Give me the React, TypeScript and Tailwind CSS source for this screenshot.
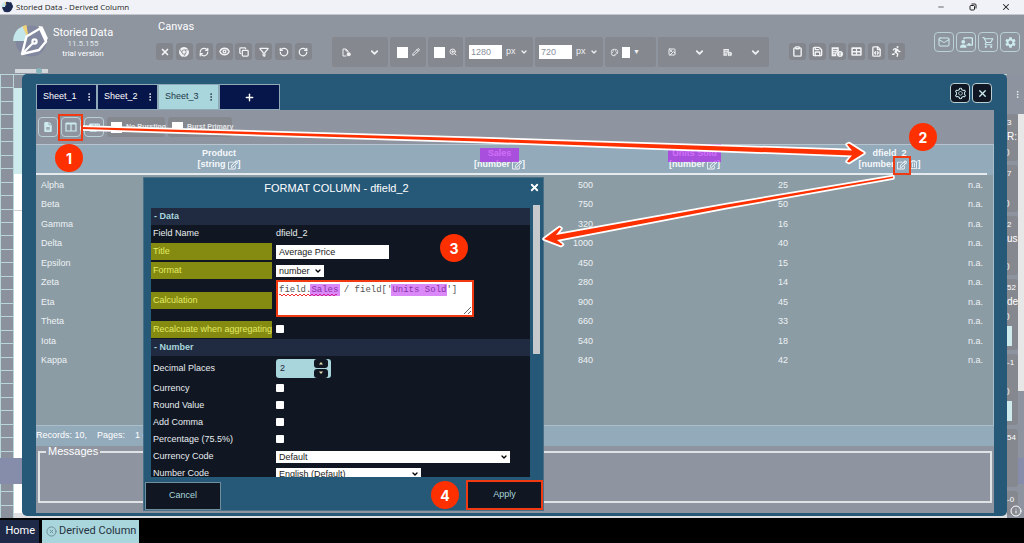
import React from "react";
import {
  Clipboard, Copy, Eye, FileCode, Filter, Image, Mail, Minus, Pencil, Plus, RefreshCw,
  RotateCcw, RotateCw, Save, X, ZoomIn, ChevronDown, Info, CircleX, EllipsisVertical,
} from "lucide-react";
import { FaChrome, FaChalkboardUser, FaPersonRunning, FaFileInvoice, FaFileLines } from "react-icons/fa6";
import { FaRegEdit, FaRegTrashAlt } from "react-icons/fa";
import { MdOutlinePalette, MdOutlineShoppingCart, MdSettings } from "react-icons/md";
import { AiOutlineSetting } from "react-icons/ai";

const sans = "font-['Liberation_Sans',Arial,sans-serif]";
const roboto = "font-['Roboto',sans-serif]";

function Logo({ className, dark, pen }: { className: string; dark: string; pen: string }) {
  return (
    <svg viewBox="0 0 36 36" className={className} aria-hidden="true">
      <circle cx="19" cy="18" r="15.500" fill={dark} />
      <path d="M17 18 L1 18 A17 17 0 0 1 11 3 Z" fill="#c3e7ea" />
      <path d="M17 18 L10.500 3.500 A16 16 0 0 1 14.500 2 Z" fill="#f2d37a" />
      <path d="M10 31 L14.500 13.500 L28 5.500 L34 18.500 L27 27 Z" fill={dark} stroke={pen} strokeWidth="2.400" strokeLinejoin="round" />
      <path d="M26.500 3 L30.500 3.500 L35.800 15 L34 20 Z" fill={pen} />
      <path d="M10 31 L21 20" stroke={pen} strokeWidth="2.200" />
      <circle cx="22.500" cy="18.500" r="3.200" fill={pen} />
      <circle cx="22.500" cy="18.500" r="1" fill={dark} />
    </svg>
  );
}

function PageDot({ size }: { size: number }) {
  return (
    <svg viewBox="0 0 18 16" width={size} height={size} fill="none" stroke="currentColor" strokeWidth="2" aria-hidden="true">
      <path d="M9 15H2V1H8L12 5V8M8 1V5H12" />
      <circle cx="13.500" cy="11.500" r="4" fill="currentColor" stroke="none" />
    </svg>
  );
}

function ReportInfo({ size }: { size: number }) {
  return (
    <svg viewBox="0 0 20 18" width={size} height={size} aria-hidden="true">
      <path d="M1 1H13V8A6 6 0 0 0 9 16H1Z" fill="currentColor" />
      <path d="M3.500 5H10.500M3.500 8.500H9M3.500 12H7" stroke="#83868c" strokeWidth="1.400" />
      <circle cx="15" cy="12.500" r="5" fill="currentColor" />
      <path d="M15 9.500V13.500M15 14.500V16" stroke="#83868c" strokeWidth="1.500" />
    </svg>
  );
}

function GridIcon({ size }: { size: number }) {
  return (
    <svg viewBox="0 0 18 16" width={size} height={size} aria-hidden="true">
      <path fill="currentColor" fillRule="evenodd" d="M2 1H16Q17.500 1 17.500 2.500V13.500Q17.500 15 16 15H2Q.500 15 .500 13.500V2.500Q.500 1 2 1ZM3 4V7H8V4ZM10 4V7H15V4ZM3 9.500V12.500H8V9.500ZM10 9.500V12.500H15V9.500Z" />
    </svg>
  );
}

function ToolButton({ label, children }: { label: string; children: React.ReactNode }) {
  return (
    <button aria-label={label} className="flex size-[17px] items-center justify-center rounded-[3px] bg-[#83868c] text-[#f1f3f5]">
      {children}
    </button>
  );
}

function Group({ className, children }: { className: string; children: React.ReactNode }) {
  return <div className={`flex h-[30px] shrink-0 items-center rounded-[2px] bg-[#85888f] text-[#eef0f2] ${className}`}>{children}</div>;
}

function OutlineButton({ label, className = "", children }: { label: string; className?: string; children: React.ReactNode }) {
  return (
    <button aria-label={label} className={`flex size-5 shrink-0 items-center justify-center rounded-[4px] border border-[#b9d0d5] text-[#cdebee] ${className}`}>
      {children}
    </button>
  );
}

function SizeField({ label, value }: { label: string; value: string }) {
  return (
    <Group className="w-[68px] gap-1 pl-1">
      <input aria-label={label} defaultValue={value} className="h-[14px] w-[33px] bg-white pl-[2px] text-[9px] leading-3 text-[#8a919b]" />
      <button aria-label={`${label} unit`} className="flex items-center gap-1 text-[9px]">
        px <ChevronDown size={8} strokeWidth={4} />
      </button>
    </Group>
  );
}

function Header() {
  return (
    <header className="flex h-[59px] shrink-0 bg-[#8e959f] text-white">
      <Logo className="ml-3 mt-2 size-9 shrink-0" dark="#81879e" pen="#ffffff" />
      <div className={`ml-[5px] mt-3 flex w-[60px] shrink-0 flex-col items-center text-center ${roboto}`}>
        <div className="whitespace-nowrap text-[11px] leading-3">Storied Data</div>
        <div className="text-[8px] leading-[10px] text-[#dfe3e6]">11.5.155</div>
        <div className="whitespace-nowrap text-[8px] leading-[10px]">trial version</div>
      </div>
      <div className="ml-[43px] mt-[6px] w-[156px] shrink-0">
        <h1 className={`pl-[2px] text-[11px] leading-3 ${roboto}`}>Canvas</h1>
        <div className="mt-[10px] flex justify-between">
          <ToolButton label="Close"><X size={10} strokeWidth={4} /></ToolButton>
          <ToolButton label="Browser"><FaChrome size={10} /></ToolButton>
          <ToolButton label="Refresh"><RefreshCw size={10} strokeWidth={3} /></ToolButton>
          <ToolButton label="Preview"><Eye size={11} strokeWidth={3} /></ToolButton>
          <ToolButton label="Copy"><Copy size={10} strokeWidth={3} /></ToolButton>
          <ToolButton label="Filter"><Filter size={10} strokeWidth={3} /></ToolButton>
          <ToolButton label="Undo"><RotateCcw size={10} strokeWidth={3} /></ToolButton>
          <ToolButton label="Redo"><RotateCw size={10} strokeWidth={3} /></ToolButton>
        </div>
      </div>
      <div className={`ml-5 mt-[22px] flex shrink-0 gap-[2px] ${sans}`}>
        <Group className="w-14 justify-between pl-[10px] pr-2">
          <PageDot size={9} />
          <ChevronDown size={11} strokeWidth={4} />
        </Group>
        <Group className="w-9 justify-center gap-1">
          <span className="size-[11px] bg-white" />
          <Pencil size={8} strokeWidth={3} />
        </Group>
        <Group className="w-[35px] justify-center gap-1">
          <span className="size-[11px] bg-white" />
          <ZoomIn size={8} strokeWidth={3} />
        </Group>
        <SizeField label="Width" value="1280" />
        <SizeField label="Height" value="720" />
        <Group className="w-[51px] gap-[3px] pl-[5px]">
          <MdOutlinePalette size={9} />
          <span className="h-[11px] w-2 bg-white" />
          <span className="text-[7px]">▼</span>
        </Group>
        <Group className="w-[111px] justify-between pl-[10px] pr-2">
          <Image size={8} strokeWidth={3} />
          <ChevronDown size={11} strokeWidth={4} />
          <ReportInfo size={9} />
          <ChevronDown size={11} strokeWidth={4} />
        </Group>
      </div>
      <div className="ml-5 mt-7 flex w-[116px] shrink-0 justify-between">
        <ToolButton label="Paste"><Clipboard size={11} strokeWidth={3} /></ToolButton>
        <ToolButton label="Save"><Save size={11} strokeWidth={3} /></ToolButton>
        <ToolButton label="Report"><ReportInfo size={12} /></ToolButton>
        <ToolButton label="Table"><GridIcon size={11} /></ToolButton>
        <ToolButton label="Code"><FileCode size={11} strokeWidth={3} /></ToolButton>
        <ToolButton label="Run"><FaPersonRunning size={11} /></ToolButton>
      </div>
      <div className="ml-auto mr-1 mt-[17px] flex gap-[2px]">
        <OutlineButton label="Mail"><Mail size={12} strokeWidth={2} /></OutlineButton>
        <OutlineButton label="Training"><FaChalkboardUser size={13} /></OutlineButton>
        <OutlineButton label="Cart"><MdOutlineShoppingCart size={13} /></OutlineButton>
        <OutlineButton label="Settings"><MdSettings size={13} /></OutlineButton>
      </div>
    </header>
  );
}

const cards = [
  { h: "h-[47px]", first: "3", second: "R:", last: ")" },
  { h: "h-[47px]", first: "7", second: "", last: ")" },
  { h: "h-[59px]", first: "2", second: "us", last: ")" },
  { h: "h-[71px]", first: "52", second: "de", last: ")", swatch: true },
  { h: "h-[71px]", first: "-1", second: "", last: ")", swatch: true },
  { h: "h-[58px]", first: "54", second: "", last: "" },
  { h: "h-[24px]", first: "-0", second: "", last: "" },
];

function Backdrop() {
  return (
    <div className="flex h-full overflow-hidden bg-[#8d949f]">
      <div className="flex w-[14px] shrink-0 flex-col bg-[#8b929d]">
        {Array.from({ length: 33 }, (_, i) => (
          <div key={i} className="flex-1 border-l border-r border-t border-[#b9d6da]" />
        ))}
      </div>
      <div className="flex grow flex-col bg-white">
        <div className="h-[14px] border-t border-[#b9d6da] bg-[#8b929d]" />
        <div className="h-[86px] bg-[#cdeaec]" />
        <div className="h-[37px] border-b border-[#d0d0d4]" />
        <div className="grow" />
        <div className="h-[5px] bg-[#dfdfe1]" />
      </div>
      <div className={`relative flex w-[17px] shrink-0 text-white ${sans}`}>
        <div className="flex w-[11px] shrink-0 flex-col gap-[4px] bg-[#8d949f] pt-10">
          {cards.map((c, i) => (
            <div key={i} className={`${c.h} relative z-10 flex shrink-0 flex-col rounded-r-[3px] bg-[#85888f] py-1 text-[8px] leading-[10px]`}>
              <span>{c.first}</span>
              {c.second && <span className="mt-1 text-[10px]">{c.second}</span>}
              {c.last && <span className="mt-auto">{c.last}</span>}
              {c.swatch && <span className="mt-[5px] h-5 w-[5px] shrink-0 bg-[#cdeaec]" />}
            </div>
          ))}
        </div>
        <EllipsisVertical size={9} className="absolute right-[2px] top-4" />
        <div className="pt-10">
          <div className="h-[277px] w-[6px] bg-[#e7e7e7]" />
        </div>
      </div>
    </div>
  );
}

const data = [
  ["Alpha", 500, 25], ["Beta", 750, 50], ["Gamma", 320, 16], ["Delta", 1000, 40], ["Epsilon", 450, 15],
  ["Zeta", 280, 14], ["Eta", 900, 45], ["Theta", 660, 33], ["Iota", 540, 18], ["Kappa", 840, 42],
];

function ColumnHead({ title, type, mark, removable }: { title: string; type: string; mark?: string; removable?: boolean }) {
  return (
    <th className="h-[28px] p-0 align-middle font-bold">
      <div className="flex flex-col items-center leading-[11px]">
        <span className="relative">
          {title}
          {mark && <span className={`absolute bottom-[-3px] z-30 bg-[#b812f3]/60 ${mark}`} />}
        </span>
        <span className="flex items-center">
          <span className="mr-[2px]">[{type}</span>
          <FaRegEdit size={10} />
          {removable && <FaRegTrashAlt size={9} className="ml-[2px]" />}
          <span>]</span>
        </span>
      </div>
    </th>
  );
}

function Columns() {
  return (
    <colgroup>
      <col />
      <col className="w-[195px]" />
      <col className="w-[195px]" />
      <col className="w-[195px]" />
    </colgroup>
  );
}

function DataTable() {
  return (
    <div className="h-[282px] border-b border-r border-[#a9bec9] bg-[#8b9ca5]">
      <div className="border-t border-[#b7c4cd] bg-[#93aabb] pr-[6px] text-[#f5f8fa]">
        <div className="border-b-2 border-[#e4eaee]">
          <table className="w-full table-fixed border-collapse text-[9px]">
            <Columns />
            <thead>
              <tr>
                <ColumnHead title="Product" type="string" />
                <ColumnHead title="Sales" type="number" mark="-left-2 -right-2 h-[14px]" />
                <ColumnHead title="Units Sold" type="number" mark="-left-1 -right-1 h-[18px]" />
                <ColumnHead title="dfield_2" type="number" removable />
              </tr>
            </thead>
          </table>
        </div>
      </div>
      <div className="pr-[6px]">
        <table aria-label="Records" className="h-[195px] w-full table-fixed border-collapse text-[9px] leading-[10px] text-[#eef2f4]">
          <Columns />
          <tbody>
            {data.map(([name, sales, units]) => (
              <tr key={name}>
                <td className="py-0 pl-[5px]">{name}</td>
                <td className="py-0 pr-1 text-right">{sales}</td>
                <td className="py-0 pr-1 text-right">{units}</td>
                <td className="py-0 pr-1 text-right">n.a.</td>
              </tr>
            ))}
          </tbody>
        </table>
      </div>
    </div>
  );
}

function Section({ children }: { children: React.ReactNode }) {
  return <h3 className="flex h-[17px] shrink-0 items-center bg-[#202b41] pl-[3px] font-bold text-[#a9d6dc]">{children}</h3>;
}

function Row({ label, htmlFor, h, mark, children }: { label: string; htmlFor?: string; h: string; mark?: boolean; children: React.ReactNode }) {
  return (
    <div className={`flex shrink-0 items-center ${h}`}>
      <label
        htmlFor={htmlFor}
        className={`flex h-[17px] w-[121px] shrink-0 items-center whitespace-nowrap pl-[2px] ${mark ? "bg-[#858b11] text-[#e2ea62]" : "text-[#e8edf0]"}`}
      >
        {label}
      </label>
      <div className="ml-1 flex grow items-center">{children}</div>
    </div>
  );
}

function Dropdown({ id, value, w }: { id: string; value: string; w: string }) {
  return (
    <div className={`relative ${w}`}>
      <select id={id} className="block h-3 w-full appearance-none bg-white pl-[3px] text-[9px] leading-3 text-[#222]">
        <option>{value}</option>
      </select>
      <ChevronDown size={8} strokeWidth={4} className="pointer-events-none absolute right-[2px] top-[2px] text-black" />
    </div>
  );
}

function Tick({ id }: { id: string }) {
  return <input id={id} type="checkbox" className="mb-[2px] size-2 appearance-none rounded-[1px] bg-white" />;
}

function FormatDialog() {
  return (
    <section
      aria-label="Format column"
      className={`absolute left-[121px] top-[103px] flex h-[334px] w-[401px] flex-col border border-[#4a7088] bg-[#265878] ${sans}`}
    >
      <div className="flex h-[30px] shrink-0 items-start pt-[3px] text-white">
        <h2 className="grow text-center text-[11px] leading-[14px]">FORMAT COLUMN - dfield_2</h2>
        <button aria-label="Close dialog" className="mr-[3px] mt-[1px]"><X size={11} strokeWidth={4} /></button>
      </div>
      <div className="flex min-h-0 grow">
        <div className="ml-[7px] flex h-[269px] w-[379px] flex-col overflow-hidden bg-[#101722] text-[9px] leading-[11px]">
          <Section>- Data</Section>
          <Row label="Field Name" h="h-[17px]"><span className="text-[#e8edf0]">dfield_2</span></Row>
          <Row label="Title" htmlFor="title" h="h-[19px]" mark>
            <input id="title" defaultValue="Average Price" className="h-[14px] w-[113px] bg-white pl-[3px] text-[#222]" />
          </Row>
          <Row label="Format" htmlFor="format" h="h-[19px]" mark><Dropdown id="format" value="number" w="w-12" /></Row>
          <Row label="Calculation" htmlFor="calculation" h="h-10" mark>
            <div className="relative -mt-1">
              <textarea
                id="calculation"
                spellCheck={false}
                defaultValue="field.Sales / field['Units Sold']"
                className="block h-[37px] w-[198px] overflow-hidden border-2 border-[#f23a12] bg-white px-[1px] py-[3px] font-['Liberation_Mono',monospace] text-[9px] leading-[10px] text-[#555]"
              />
              <svg className="pointer-events-none absolute left-[3px] top-[13px]" width="60" height="3" aria-hidden="true">
                <path d="M0 2 q1 -2 2 0 t2 0 t2 0 t2 0 t2 0 t2 0 t2 0 t2 0 t2 0 t2 0 t2 0 t2 0 t2 0 t2 0 t2 0 t2 0 t2 0 t2 0 t2 0 t2 0 t2 0 t2 0 t2 0 t2 0 t2 0 t2 0 t2 0 t2 0 t2 0" fill="none" stroke="#f03030" />
              </svg>
              <span className="pointer-events-none absolute left-[34px] top-1 h-3 w-[30px] bg-[#b812f3]/50" />
              <span className="pointer-events-none absolute left-[115px] top-1 h-3 w-[56px] bg-[#b812f3]/50" />
            </div>
          </Row>
          <Row label="Recalcuate when aggregating" htmlFor="recalc" h="h-[19px]" mark><Tick id="recalc" /></Row>
          <Section>- Number</Section>
          <Row label="Decimal Places" htmlFor="places" h="h-6">
            <div className="flex h-[19px] w-[55px] items-center rounded-[3px] bg-[#a9d6dc]">
              <input id="places" defaultValue="2" className="h-4 w-[38px] bg-transparent pl-1 text-[#223]" />
              <div className="flex h-[19px] w-[14px] flex-col gap-px">
                <button aria-label="Increase" className="flex flex-1 items-center justify-center rounded-[3px] bg-[#101722]">
                  <svg width="6" height="4" aria-hidden="true"><path d="M1 3.500 L3 1 L5 3.500Z" fill="#e9dfb0" /></svg>
                </button>
                <button aria-label="Decrease" className="flex flex-1 items-center justify-center rounded-[3px] bg-[#101722]">
                  <svg width="6" height="4" aria-hidden="true"><path d="M1 .500 L3 3 L5 .500Z" fill="#e9dfb0" /></svg>
                </button>
              </div>
            </div>
          </Row>
          <Row label="Currency" htmlFor="currency" h="h-[17px]"><Tick id="currency" /></Row>
          <Row label="Round Value" htmlFor="round" h="h-[17px]"><Tick id="round" /></Row>
          <Row label="Add Comma" htmlFor="comma" h="h-[17px]"><Tick id="comma" /></Row>
          <Row label="Percentage (75.5%)" htmlFor="pct" h="h-[17px]"><Tick id="pct" /></Row>
          <Row label="Currency Code" htmlFor="ccode" h="h-[17px]"><Dropdown id="ccode" value="Default" w="w-[234px]" /></Row>
          <Row label="Number Code" htmlFor="ncode" h="h-[17px]"><Dropdown id="ncode" value="English (Default)" w="w-[145px]" /></Row>
        </div>
        <div className="-mt-[3px] ml-[3px] h-[149px] w-[7px] bg-[#c6c9cc]" />
      </div>
      <div className="flex shrink-0 items-end justify-between pl-[1px] text-[9px] text-[#a9d6dc]">
        <button className="h-7 w-[76px] border border-[#6f8f9d] bg-[#101722]">Cancel</button>
        <button className="h-[30px] w-[77px] border-2 border-[#f23a12] bg-[#101722]">Apply</button>
      </div>
    </section>
  );
}

function Tab({ label, active }: { label: string; active?: boolean }) {
  return (
    <button
      className={`flex h-[26px] w-[61px] items-center justify-between border border-[#8fa9b8] pl-[6px] pr-[2px] text-[9px] ${active ? "bg-[#a9d6dc] text-[#24374a]" : "bg-[#07164a] text-white"}`}
    >
      {label}
      <EllipsisVertical size={10} strokeWidth={2} />
    </button>
  );
}

function BurstOption({ id, label, w }: { id: string; label: string; w: string }) {
  return (
    <label htmlFor={id} className={`flex h-5 shrink-0 items-center gap-1 whitespace-nowrap rounded-[3px] bg-[#85888f] pl-1 text-[7px] font-bold text-[#e3e6e9] ${w}`}>
      <input id={id} type="checkbox" className="size-[11px] shrink-0 appearance-none bg-white" />
      {label}
    </label>
  );
}

function SheetModal() {
  return (
    <div className={`absolute bottom-[2px] left-[22px] right-[17px] top-0 z-10 rounded-[5px] bg-[#265878] pl-[14px] pr-[13px] ${sans}`}>
      <div className="flex h-9 items-end">
        <Tab label="Sheet_1" />
        <Tab label="Sheet_2" />
        <Tab label="Sheet_3" active />
        <button aria-label="Add sheet" className="flex h-[26px] w-[61px] items-center justify-center border border-[#8fa9b8] bg-[#07164a] text-white">
          <Plus size={11} strokeWidth={3} />
        </button>
        <div className="ml-auto mr-[2px] flex gap-[2px] pb-[7px]">
          <OutlineButton label="Sheet settings" className="bg-[#101722]"><AiOutlineSetting size={13} /></OutlineButton>
          <OutlineButton label="Close sheets" className="bg-[#101722]"><X size={11} strokeWidth={3} /></OutlineButton>
        </div>
      </div>
      <div className="bg-[#8f95a0] pb-[10px]">
        <div className="flex h-[34px] items-center gap-[3px] pl-[2px]">
          <OutlineButton label="Sheet data"><FaFileLines size={10} /></OutlineButton>
          <OutlineButton label="Derived column">
            <svg viewBox="0 0 12 10" width="12" height="10" fill="none" stroke="currentColor" aria-hidden="true">
              <path d="M1 1.500H11V9H1Z M6 2V9" strokeWidth="1.200" />
              <path d="M1 1.500H11" strokeWidth="2" />
            </svg>
          </OutlineButton>
          <OutlineButton label="Aggregate"><FaFileInvoice size={11} className="rotate-90" /></OutlineButton>
          <BurstOption id="noburst" label="No Bursting" w="w-[58px]" />
          <BurstOption id="burst" label="Burst Primary" w="w-[64px]" />
        </div>
        <DataTable />
        <div className="flex h-5 items-center gap-[10px] bg-[#93aabb] text-[9px] text-white">
          <span>Records: 10,</span>
          <span>Pages:</span>
          <span>1 of</span>
        </div>
        <fieldset className="mx-[2px] h-[57px] border-2 border-[#dfe3e6] pl-[6px] text-[11px] leading-[11px] text-white">
          <legend className="px-[2px]">Messages</legend>
        </fieldset>
      </div>
      <FormatDialog />
    </div>
  );
}

function Badge({ n, place }: { n: number; place: string }) {
  return (
    <div className={`absolute z-40 flex size-7 items-center justify-center rounded-full bg-[#ff3000] font-['Inter',sans-serif] text-[14px] font-bold text-white ${place}`}>
      {n}
    </div>
  );
}

function Callouts() {
  return (
    <>
      <svg className="pointer-events-none absolute left-0 top-0 z-20" width="1024" height="543" aria-hidden="true">
        <g fill="#ff3000" stroke="#fff" strokeWidth="3.500" paintOrder="stroke" strokeLinejoin="round">
          <path d="M82 127 L480 138.500 L852 150.500 L847 144.500 L849 143.500 L864 153 L849 162.500 L847 161.500 L852 155.500 L480 141.500 L82 129 Z" />
          <path d="M893 176.500 L727 204.500 L556 235 L561 228.500 L559.500 227.500 L544 239 L561 245.500 L562.500 244.500 L557 240 L727 207.500 L893 178 Z" />
        </g>
      </svg>
      <div className="absolute left-[58px] top-[114px] z-30 h-[27px] w-[25px] border-2 border-[#f23a12]" />
      <div className="absolute left-[893px] top-[156px] z-30 h-[19px] w-[18px] border-2 border-[#f23a12]" />
      <Badge n={1} place="left-[55px] top-[144px]" />
      <Badge n={2} place="left-[909px] top-[123px]" />
      <Badge n={3} place="left-[440px] top-[234px]" />
      <Badge n={4} place="left-[431px] top-[481px]" />
    </>
  );
}

export default function App() {
  return (
    <div className="relative flex h-screen flex-col overflow-hidden bg-black">
      <div className="flex h-[15px] shrink-0 items-center border-b border-[#c4c7cc] bg-[#f1f2f8] pl-[1px] text-[#222]">
        <Logo className="size-3" dark="#1d2a52" pen="#1d2a52" />
        <span className="ml-[3px] font-['Open_Sans','Noto_Sans',sans-serif] text-[8px] leading-[14px]">Storied Data - Derived Column</span>
        <div className="ml-auto mr-[13px] flex items-center gap-6">
          <button aria-label="Minimize"><Minus size={8} /></button>
          <button aria-label="Restore">
            <svg viewBox="0 0 8 8" width="8" height="8" fill="none" stroke="currentColor" aria-hidden="true">
              <rect x="1" y="2.500" width="4.500" height="4.500" rx="1" />
              <path d="M2.500 1H6Q7 1 7 2V5.500" />
            </svg>
          </button>
          <button aria-label="Close window"><X size={10} strokeWidth={2.5} /></button>
        </div>
      </div>
      <Header />
      <main className="relative min-h-0 grow">
        <div className="absolute -top-[5px] left-[15px] h-1 w-[33px] bg-[#d3d6da]">
          <div className="absolute -top-px left-[21px] size-[6px] rounded-full bg-[#86b4bb]" />
        </div>
        <Backdrop />
        <div className="absolute inset-x-0 top-[384px] h-[26px] bg-[#858dab]" />
        <SheetModal />
        <Info size={12} className="absolute bottom-[1px] right-[2px] z-10 text-white" />
      </main>
      <nav className={`flex h-[25px] shrink-0 items-end gap-[3px] bg-black pt-[2px] text-[11px] ${roboto}`}>
        <a href="#home" className="flex h-[23px] w-[39px] items-center justify-end bg-[#1d2947] pr-1 text-white">Home</a>
        <a href="#derived" className="flex h-[23px] w-[97px] items-center gap-[2px] whitespace-nowrap bg-[#a9d6dc] pl-1 text-[#26323f]">
          <CircleX size={11} strokeWidth={2} className="shrink-0 text-[#6c8a92]" />
          Derived Column
        </a>
      </nav>
      <Callouts />
    </div>
  );
}
